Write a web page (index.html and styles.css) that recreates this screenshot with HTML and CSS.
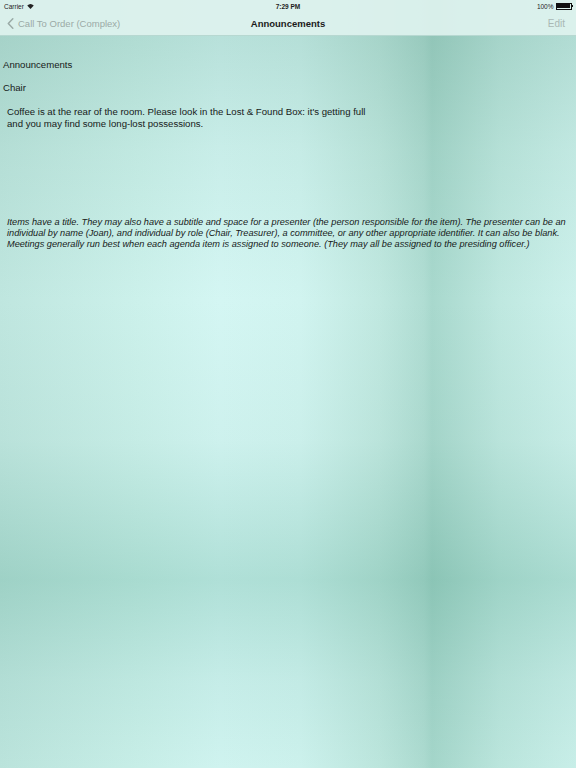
FILE: index.html
```html
<!DOCTYPE html>
<html>
<head>
<meta charset="utf-8">
<link rel="stylesheet" href="styles.css">
</head>
<body>
<div class="screen">
  <header class="bar">
    <div class="status">
      <div class="status-left">Carrier
        <svg class="wifi" width="7" height="5" viewBox="0 0 14 10"><path d="M7 10 L0.5 3.2 A9.5 9.5 0 0 1 13.5 3.2 Z" fill="#222"/></svg>
      </div>
      <div class="status-time">7:29 PM</div>
      <div class="status-right">100%
        <span class="battery"><span class="battery-fill"></span></span><span class="battery-nub"></span>
      </div>
    </div>
    <nav class="nav">
      <div class="back">
        <svg class="chev" width="7" height="11" viewBox="0 0 7 11"><path d="M5.8 0.8 L1.3 5.5 L5.8 10.2" fill="none" stroke="#9aaaa6" stroke-width="1.5" stroke-linecap="round" stroke-linejoin="round"/></svg>
        <span>Call To Order (Complex)</span>
      </div>
      <div class="title">Announcements</div>
      <div class="edit">Edit</div>
    </nav>
  </header>
  <main class="content">
    <div class="item-title">Announcements</div>
    <div class="presenter">Chair</div>
    <p class="notes">Coffee is at the rear of the room. Please look in the Lost &amp; Found Box: it's getting full<br>and you may find some long-lost possessions.</p>
    <p class="help">Items have a title. They may also have a subtitle and space for a presenter (the person responsible for the item). The presenter can be an individual by name (Joan), and individual by role (Chair, Treasurer), a committee, or any other appropriate identifier. It can also be blank. Meetings generally run best when each agenda item is assigned to someone. (They may all be assigned to the presiding officer.)</p>
  </main>
</div>
</body>
</html>
```
FILE: styles.css
```css
html, body {
  margin: 0;
  padding: 0;
}
body {
  width: 576px;
  height: 768px;
  overflow: hidden;
  font-family: "Liberation Sans", Arial, sans-serif;
  color: #161a19;
}
.screen {
  width: 576px;
  height: 768px;
  display: flex;
  flex-direction: column;
  background-image:
    linear-gradient(to bottom, #dde9e5 36px, #f1f6f4 150px, #ffffff 300px, #f7faf9 440px, #d3e8e2 580px, #edf5f3 680px, #f9fcfb 768px),
    linear-gradient(to right, #bfe6df 0px, #ccf1eb 140px, #d4f6f3 220px, #d1f4f0 300px, #c0e8e0 380px, #b0ddd3 424px, #a8d8cd 432px, #bfe8e0 500px, #cdf1ec 576px);
  background-blend-mode: multiply;
}
.bar {
  background: rgba(222, 242, 238, 0.93);
  border-bottom: 1px solid #b7d8d1;
  height: 35px;
  display: flex;
  flex-direction: column;
}
.status {
  height: 12px;
  display: flex;
  align-items: center;
  justify-content: space-between;
  padding: 0 3px 0 4px;
  font-size: 6.5px;
  color: #1c1c1c;
  position: relative;
}
.status-left {
  display: flex;
  align-items: center;
  gap: 3px;
}
.status-time {
  position: absolute;
  left: 0;
  right: 0;
  text-align: center;
  font-weight: bold;
  font-size: 6.5px;
}
.status-right {
  display: flex;
  align-items: center;
  gap: 2px;
}
.battery {
  width: 13px;
  height: 4px;
  border: 0.5px solid #111;
  padding: 0.5px;
  display: inline-flex;
  box-sizing: content-box;
}
.battery-fill {
  flex: 1;
  background: #111;
}
.battery-nub {
  width: 1px;
  height: 2px;
  background: #111;
  margin-left: -1.5px;
}
.nav {
  flex: 1;
  display: flex;
  align-items: center;
  justify-content: space-between;
  padding: 0 11px 0 7px;
  position: relative;
  font-size: 9.5px;
}
.back {
  display: flex;
  align-items: center;
  gap: 4px;
  color: #9aaaa6;
}
.title {
  position: absolute;
  left: 0;
  right: 0;
  text-align: center;
  font-weight: bold;
  color: #1a1a1a;
  pointer-events: none;
}
.edit {
  color: #a9b8b4;
  font-size: 10px;
}
.content {
  padding: 23px 0 0 3px;
  font-size: 9.6px;
}
.item-title {
  height: 12px;
  line-height: 12px;
}
.presenter {
  margin-top: 11px;
  height: 12px;
  line-height: 12px;
}
.notes {
  margin: 12px 0 0 4px;
  line-height: 12px;
}
.help {
  margin: 87px 0 0 4px;
  width: 566px;
  font-style: italic;
  font-size: 9.2px;
  line-height: 11px;
}
```
